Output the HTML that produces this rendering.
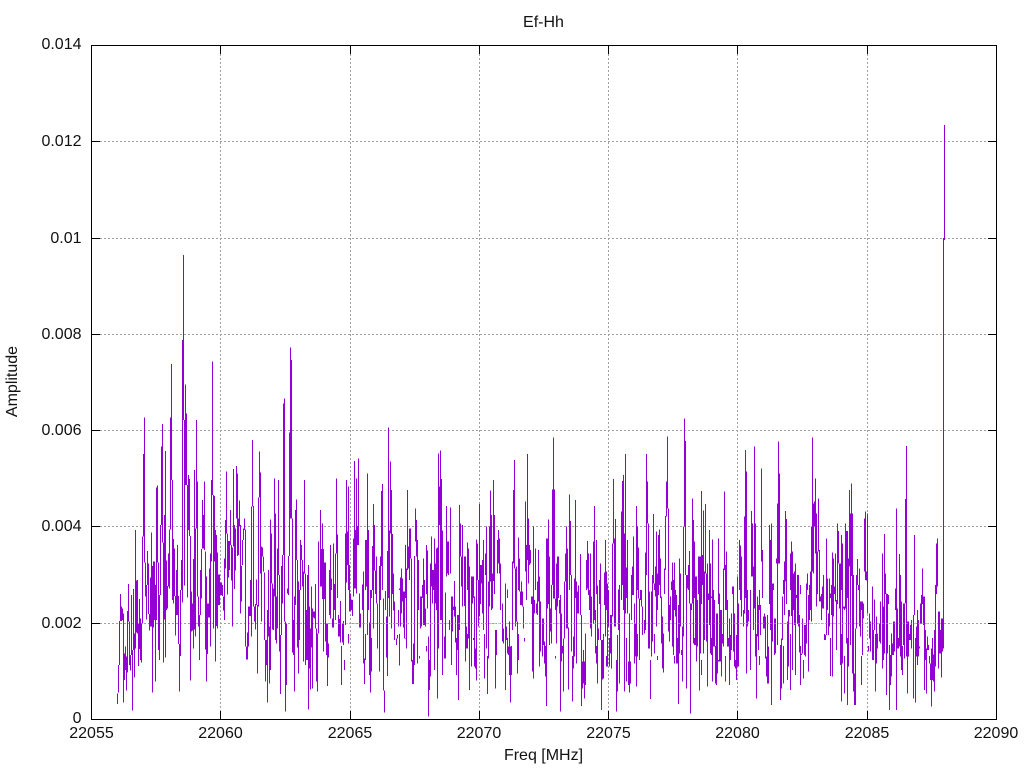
<!DOCTYPE html>
<html>
<head>
<meta charset="utf-8">
<title>Ef-Hh</title>
<style>
html,body{margin:0;padding:0;background:#fff;width:1024px;height:768px;overflow:hidden}
svg{display:block}
text{font-family:"Liberation Sans",sans-serif;font-size:16px;fill:#111}
</style>
</head>
<body>
<svg xmlns="http://www.w3.org/2000/svg" width="1024" height="768" viewBox="0 0 1024 768">
<defs>
<pattern id="gaps" patternUnits="userSpaceOnUse" x="0" y="590" width="17" height="70">
<g fill="#fff" shape-rendering="crispEdges">
<rect x="1" y="4" width="1" height="52"/>
<rect x="4" y="14" width="1" height="56"/>
<rect x="8" y="0" width="1" height="44"/>
<rect x="11" y="20" width="1" height="46"/>
<rect x="14" y="8" width="1" height="40"/>
</g>
</pattern>
</defs>
<rect width="1024" height="768" fill="#fff"/>
<g stroke="#a0a0a0" stroke-width="1" stroke-dasharray="2 2" fill="none" shape-rendering="crispEdges">
<path d="M92 141.5H996M92 238.5H996M92 334.5H996M92 430.5H996M92 526.5H996M92 623.5H996"/>
<path d="M220.5 46V719M350.5 46V719M479.5 46V719M608.5 46V719M737.5 46V719M867.5 46V719"/>
</g>
<g fill="none" stroke="#9400d3" shape-rendering="crispEdges" stroke-width="3">
<path transform="translate(90.17 240) scale(.33333)" d="M82 1360V1392M85 1275V1358M88 1143V1275M91 1062V1143M94 1100V1143M97 1105V1140M100 1120V1388M103 1240V1320M106 1220V1290M109 1250V1352M112 1113V1298M115 1032V1145M118 1145V1275M121 1245V1292M124 1065V1245M127 1230V1412M130 1047V1230M133 1180V1313M136 870V1225M139 1022V1178M142 1020V1180M145 1150V1278M148 1077V1227M151 1135V1260M154 1150V1268M157 890V1150M160 642V890M163 532V968M166 968V1070M169 1035V1138M172 933V1035M175 970V1122M178 1122V1172M181 1012V1160M184 877V1160M187 978V1358M190 965V1162M193 965V1140M196 1035V1325M199 743V1140M202 736V968M205 968V1230M208 1065V1260M211 855V1065M214 620V855M217 552V908M220 908V1268M223 825V1138M226 633V1253M229 962V1110M232 1038V1105M235 940V1040M238 868V1045M241 532V868M244 372V720M247 720V1080M250 897V1090M253 925V1068M256 1068V1187M259 990V1125M262 915V1125M265 1068V1212M268 1212V1355M271 1050V1248M274 960V1050M277 300V1088M280 45V540M283 540V1037M286 433V735M289 520V735M292 735V1073M295 705V870M298 717V888M301 888V1322M304 1055V1175M307 1090V1172M310 957V1226M313 690V1168M316 865V1190M319 540V865M322 725V1070M325 1070V1160M328 1125V1260M331 990V1125M334 927V1075M337 780V925M340 825V925M343 725V930M346 935V1228M349 1010V1325M352 1090V1242M355 1090V1133M358 985V1133M361 940V1220M364 720V965M367 365V765M370 765V1165M373 768V965M376 870V1265M379 885V1158M382 938V1165M385 1003V1095M388 1003V1095M391 1027V1065M394 1027V1065M397 1035V1068M400 1070V1112M403 955V1140M406 840V985M409 695V880M412 880V1063M415 903V1012M418 903V990M421 810V915M424 915V1022M427 922V1160M430 687V920M433 855V1047M436 865V992M439 678V835M442 700V948M445 835V945M448 782V860M451 855V1120M454 978V1085M457 900V975M460 865V900M463 835V870M466 868V1220M469 1220V1258M472 1178V1258M475 1100V1220M478 1100V1128M481 1020V1128M484 800V1190M487 600V800M490 798V1100M493 1100V1145M496 1092V1168M499 1018V1095M502 1095V1300M505 772V1100M508 635V772M511 697V1000M514 920V1145M517 922V950M520 950V995M523 998V1200M526 1200V1325M529 1200V1275M532 1110V1388M535 990V1190M538 1160V1330M541 838V1290M544 880V1030M547 1030V1168M550 1045V1170M553 715V1070M556 820V1200M559 1070V1210M562 925V1165M565 720V1005M568 1005V1235M571 1185V1362M574 978V1185M577 945V1090M580 490V945M583 475V1145M586 1145V1415M589 1150V1335M592 1045V1060M595 948V1065M598 578V948M601 322V835M604 360V835M607 835V1238M610 1140V1245M613 1070V1355M616 810V1095M619 778V960M622 960V1222M625 1025V1300M628 1050V1200M631 900V1050M634 915V960M637 960V1040M640 995V1265M643 720V1000M646 1000V1275M649 1110V1260M652 1005V1260M655 975V1408M658 1100V1285M661 1165V1348M664 1040V1222M667 1105V1345M670 1115V1132M673 1115V1135M676 1032V1165M679 1165V1325M682 1180V1355M685 905V1180"/>
<path transform="translate(320.17 400) scale(.33333)" d="M1 330V560M4 447V560M7 370V597M10 447V755M13 487V597M16 487V725M19 670V765M22 670V858M25 730V772M28 510V645M31 435V655M34 535V683M37 655V683M40 430V683M43 552V683M46 460V660M49 235V460M52 403V645M55 645V710M58 657V710M61 603V728M64 645V855M67 670V728M70 663V735M73 680V810M76 400V675M79 240V548M82 395V495M85 260V730M88 495V635M91 580V633M94 598V633M97 600V648M100 415V590M103 183V565M106 390V565M109 235V580M112 378V435M115 175V435M118 580V683M121 640V683M124 628V670M127 553V630M130 515V790M133 775V852M136 420V780M139 420V560M142 220V705M145 390V668M148 668V825M151 570V878M154 570V815M157 438V570M160 312V685M163 375V512M166 512V595M169 470V610M172 610V745M175 645V728M178 498V815M181 470V600M184 273V498M187 252V595M190 595V872M193 872V938M196 573V745M199 650V772M202 453V828M205 82V710M208 392V650M211 185V400M214 270V685M217 402V605M220 520V632M223 605V720M226 720V752M229 715V735M232 705V715M235 630V680M238 565V797M241 533V680M244 505V640M247 535V605M250 575V683M253 575V715M256 435V715M259 505V745M262 270V510M265 440V505M268 385V540M271 385V475M274 475V785M277 760V852M280 730V852M283 468V795M286 325V425M289 360V470M292 420V790M295 480V630M298 630V775M301 590V685M304 590V680M307 555V645M310 475V675M313 540V675M316 625V680M319 435V755M322 452V625M325 710V950M328 645V870M331 490V830M334 410V560M337 510V610M340 510V668M343 415V810M346 490V610M349 445V720M352 443V895M355 160V745M358 260V375M361 152V660M364 237V660M367 392V825M370 625V720M373 710V775M376 578V775M379 318V530M382 425V520M385 425V525M388 660V690M391 322V520M394 590V795M397 590V695M400 620V650M403 543V650M406 620V728M409 620V825M412 645V750M415 645V900M418 315V690M421 370V470M424 470V560M427 375V620M430 620V690M433 470V618M436 470V785M439 680V745M442 428V745M445 445V715M448 500V870M451 650V715M454 530V800M457 530V610M460 530V720M463 590V800M466 745V805M469 418V842M472 430V540M475 540V680M478 312V650M481 495V680M484 495V550M487 480V640M490 420V690M493 690V835M496 460V525M499 380V745M502 745V882M505 545V775M508 380V620M511 272V545M514 345V630M517 520V625M520 240V543M523 345V690M526 690V865M529 690V765M532 420V520M535 390V490M538 415V520M541 490V630M544 610V700M547 610V725M550 685V730M553 640V690M556 550V870M559 680V720M562 568V760M565 740V765M568 665V825M571 740V908M574 632V825M577 485V690M580 270V490M583 180V505M586 505V680M589 500V665M592 665V820M595 413V780M598 475V575M601 575V615M604 545V615M607 575V620M610 620V685M613 620V725M616 305V515M619 435V600M622 162V480M625 355V550M628 435V495M631 450V490M634 590V695M637 590V815M640 380V835M643 600V640M646 445V640M649 610V640M652 545V645M655 450V605M658 530V800M661 605V755M664 645V690M667 655V770M670 655V735M673 725V790M676 725V830M679 415V918M682 415V625M685 358V625M688 470V735"/>
<path transform="translate(550.17 400) scale(.33333)" d="M1 625V695M4 555V730M7 268V555M10 113V595M13 268V595M16 595V775M19 490V730M22 470V620M25 470V640M28 600V640M31 585V935M34 640V785M37 645V760M40 715V875M43 545V715M46 460V545M49 380V685M52 445V685M55 682V868M58 283V685M61 363V525M64 525V755M67 755V905M70 710V805M73 535V770M76 300V660M79 545V790M82 575V640M85 557V640M88 595V725M91 462V645M94 645V918M97 785V865M100 750V850M103 785V895M106 700V855M109 480V640M112 423V565M115 460V585M118 570V680M121 460V685M124 590V710M127 600V670M130 425V670M133 318V660M136 630V760M139 420V790M142 557V850M145 685V720M148 540V720M151 490V720M154 720V930M157 720V838M160 610V835M163 517V615M166 420V710M169 515V800M172 550V800M175 570V680M178 640V800M181 645V760M184 645V805M187 430V650M190 237V430M193 415V680M196 357V680M199 705V935M202 705V875M205 568V690M208 555V850M211 600V690M214 335V600M217 243V555M220 225V645M223 400V875M226 162V640M229 503V845M232 420V640M235 785V855M238 640V878M241 785V850M244 525V660M247 500V585M250 410V585M253 610V790M256 670V770M259 318V860M262 380V770M265 443V595M268 595V780M271 570V600M274 570V620M277 620V705M280 650V700M283 660V700M286 458V690M289 162V525M292 245V370M295 370V745M298 575V745M301 745V897M304 575V770M307 525V725M310 342V550M313 550V760M316 500V590M319 395V680M322 520V780M325 405V585M328 388V555M331 475V650M334 590V730M337 650V805M340 700V818M343 505V700M346 348V510M349 245V350M352 110V325M355 325V695M358 615V725M361 590V660M364 545V660M367 487V740M370 540V765M373 487V790M376 570V650M379 585V790M382 615V790M385 615V912M388 475V760M391 520V680M394 750V765M397 680V845M400 380V710M403 55V380M406 123V525M409 525V865M412 525V565M415 495V610M418 453V610M421 610V940M424 610V670M427 295V610M430 360V730M433 425V735M436 530V735M439 530V785M442 600V740M445 470V725M448 470V872M451 470V760M454 273V825M457 465V555M460 332V760M463 515V720M466 312V520M469 520V725M472 490V860M475 580V600M478 390V675M481 490V760M484 590V765M487 418V845M490 570V740M493 600V740M496 640V850M499 640V855M502 640V820M505 415V785M508 580V785M511 630V785M514 630V830M517 660V730M520 505V740M523 275V510M526 495V845M529 455V630M532 600V740M535 655V740M538 655V855M541 705V780M544 640V750M547 560V655M550 560V755M553 640V800M556 705V805M559 705V840M562 530V800M565 610V800M568 420V610M571 437V600M574 470V650M577 655V690M580 630V680M583 350V640M586 150V670M589 215V820M592 570V680M595 630V665M598 595V675M601 570V810M604 333V530M607 370V530M610 500V690M613 140V625M616 370V770M619 590V895M622 590V710M625 615V750M628 570V795M631 615V705M634 205V485M637 450V640M640 650V685M643 640V685M646 650V775M649 770V830M652 645V850M655 740V850M658 375V690M661 420V690M664 370V915M667 550V725M670 550V660M673 655V765M676 655V760M679 475V490M682 310V735M685 125V490M688 220V490"/>
<path transform="translate(780.17 400) scale(.33333)" d="M1 735V900M4 715V865M7 590V720M10 540V850M13 485V645M16 333V545M19 357V695M22 665V840M25 630V800M28 630V650M31 460V870M34 425V648M37 455V810M40 520V680M43 515V675M46 490V825M49 585V675M52 525V670M55 525V680M58 645V757M61 555V855M64 760V765M67 655V760M70 640V835M73 675V765M76 675V770M79 550V730M82 520V600M85 585V815M88 555V660M91 515V660M94 380V665M97 113V515M100 310V520M103 305V380M106 235V460M109 340V620M112 455V590M115 295V455M118 450V605M121 590V605M124 582V660M127 560V625M130 525V625M133 625V720M136 705V720M139 415V705M142 535V750M145 640V705M148 535V680M151 580V828M154 555V645M157 457V830M160 475V650M163 560V655M166 460V605M169 600V750M172 370V680M175 393V490M178 490V625M181 490V795M184 405V905M187 430V790M190 620V625M193 620V880M196 370V625M199 393V730M202 393V915M205 475V800M208 270V500M211 340V735M214 250V528M217 340V820M220 525V875M223 820V915M226 685V915M229 525V685M232 477V555M235 555V635M238 505V680M241 605V710M244 605V855M247 605V765M250 610V655M253 355V515M256 335V540M259 515V542M262 340V640M265 640V755M268 640V715M271 665V755M274 665V770M277 560V780M280 690V780M283 598V690M286 640V875M289 650V790M292 700V745M295 690V735M298 670V725M301 605V730M304 600V630M307 460V805M310 620V780M313 402V760M316 520V670M319 580V885M322 582V760M325 585V760M328 735V930M331 765V855M334 700V830M337 730V765M340 665V765M343 665V755M346 565V740M349 325V930M352 625V745M355 605V745M358 462V740M361 525V770M364 605V810M367 735V825M370 610V735M373 610V775M376 297V610M379 138V770M382 665V880M385 665V770M388 615V720M391 675V720M394 660V745M397 640V700M400 645V895M403 405V645M406 645V908M409 680V770M412 630V795M415 660V770M418 740V745M421 610V670M424 585V670M427 505V675M430 590V675M433 590V870M436 690V780M439 745V880M442 710V750M445 735V750M448 740V790M451 790V840M454 745V920M457 680V840M460 763V845M463 690V875M466 555V800M469 430V610M472 415V560M475 635V805M478 635V760M481 690V760M484 655V832M487 655V755M490 0V745"/>
</g>
<path d="M944.5 125V240M943.5 238V402" fill="none" stroke="#9400d3" stroke-width="1" shape-rendering="crispEdges"/>
<rect x="330" y="590" width="608" height="70" fill="url(#gaps)" shape-rendering="crispEdges"/>
<path d="M330 623.5H938" fill="none" stroke="#a0a0a0" stroke-dasharray="2 2" stroke-width="1" shape-rendering="crispEdges" opacity=".6"/>
<g fill="none" stroke="#000" stroke-width="1" shape-rendering="crispEdges">
<rect x="91.5" y="45.5" width="905" height="674"/>
<path d="M92 141.5h8M92 238.5h8M92 334.5h8M92 430.5h8M92 526.5h8M92 623.5h8"/>
<path d="M996 141.5h-8M996 238.5h-8M996 334.5h-8M996 430.5h-8M996 526.5h-8M996 623.5h-8"/>
<path d="M220.5 719v-8M350.5 719v-8M479.5 719v-8M608.5 719v-8M737.5 719v-8M867.5 719v-8"/>
<path d="M220.5 46v8M350.5 46v8M479.5 46v8M608.5 46v8M737.5 46v8M867.5 46v8"/>
</g>
<g text-anchor="end">
<text x="81.5" y="49">0.014</text>
<text x="81.5" y="146">0.012</text>
<text x="81.5" y="243">0.01</text>
<text x="81.5" y="339">0.008</text>
<text x="81.5" y="435">0.006</text>
<text x="81.5" y="531">0.004</text>
<text x="81.5" y="628">0.002</text>
<text x="81.5" y="723">0</text>
</g>
<g text-anchor="middle">
<text x="91.5" y="738">22055</text>
<text x="220.5" y="738">22060</text>
<text x="350" y="738">22065</text>
<text x="479" y="738">22070</text>
<text x="608.5" y="738">22075</text>
<text x="737.5" y="738">22080</text>
<text x="867" y="738">22085</text>
<text x="996" y="738">22090</text>
<text x="543.5" y="760">Freq [MHz]</text>
<text x="543.5" y="27">Ef-Hh</text>
<text transform="translate(17 381.5) rotate(-90)">Amplitude</text>
</g>
</svg>
</body>
</html>
